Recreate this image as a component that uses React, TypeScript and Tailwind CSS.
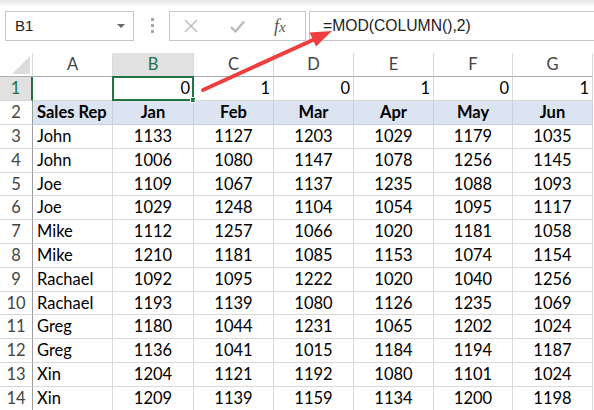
import React from 'react';

const colW = ['w-[80px]', 'w-[81px]', 'w-[80px]', 'w-[80px]', 'w-[80px]', 'w-[79px]', 'w-[80px]'];
const letters = ['A', 'B', 'C', 'D', 'E', 'F', 'G'];
const months = ['Jan', 'Feb', 'Mar', 'Apr', 'May', 'Jun'];

const rows: [string, number[]][] = [
  ['John', [1133, 1127, 1203, 1029, 1179, 1035]],
  ['John', [1006, 1080, 1147, 1078, 1256, 1145]],
  ['Joe', [1109, 1067, 1137, 1235, 1088, 1093]],
  ['Joe', [1029, 1248, 1104, 1054, 1095, 1117]],
  ['Mike', [1112, 1257, 1066, 1020, 1181, 1058]],
  ['Mike', [1210, 1181, 1085, 1153, 1074, 1154]],
  ['Rachael', [1092, 1095, 1222, 1020, 1040, 1256]],
  ['Rachael', [1193, 1139, 1080, 1126, 1235, 1069]],
  ['Greg', [1180, 1044, 1231, 1065, 1202, 1024]],
  ['Greg', [1136, 1041, 1015, 1184, 1194, 1187]],
  ['Xin', [1204, 1121, 1192, 1080, 1101, 1024]],
  ['Xin', [1209, 1139, 1159, 1134, 1200, 1198]],
];

const RowHead: React.FC<{ n: number; active?: boolean; h: string }> = ({ n, active, h }) => (
  <div
    className={`w-[33px] shrink-0 ${h} flex items-center justify-center border-b border-[#d9d9d9] ${
      active ? 'bg-[#e1e1e1] text-[#217346] border-r-2 border-r-[#217346]' : 'text-[#444] border-r border-r-[#9e9e9e]'
    }`}
  >
    {n}
  </div>
);

const Toolbar = () => (
  <div className="h-[53px] relative bg-white">
    <div className="h-[7px] bg-gradient-to-b from-[#e4e4e4] to-white" />
    <div className="flex items-start">
      {/* name box */}
      <div className="ml-[5px] mt-[4px] w-[129px] h-[30px] border border-[#c6c6c6] flex items-center justify-between pl-[9px] pr-[8px] text-[15px] text-[#222] font-['Liberation_Sans',sans-serif]">
        <span>B1</span>
        <span className="w-0 h-0 border-l-[4px] border-r-[4px] border-t-[4px] border-l-transparent border-r-transparent border-t-[#666]" />
      </div>
      <div className="ml-[17px] mt-[11px] flex flex-col gap-[3px]">
        <span className="w-[3px] h-[3px] bg-[#a6a6a6]" />
        <span className="w-[3px] h-[3px] bg-[#a6a6a6]" />
        <span className="w-[3px] h-[3px] bg-[#a6a6a6]" />
      </div>
      {/* formula buttons */}
      <div className="ml-[15px] mt-[4px] w-[137px] h-[30px] border border-[#c6c6c6] flex items-center">
        <svg width="14" height="14" viewBox="0 0 14 14" className="ml-[14px]">
          <path d="M1 1L13 13M13 1L1 13" stroke="#b9b9b9" strokeWidth="1.4" />
        </svg>
        <svg width="15" height="13" viewBox="0 0 15 13" className="ml-[32px]">
          <path d="M1 7L5.5 11.5L14 1.5" stroke="#b9b9b9" strokeWidth="2.2" fill="none" />
        </svg>
        <span className="ml-[29px] text-[18px] italic text-[#555] font-['Liberation_Serif',serif] leading-none">
          f<span className="text-[15px]">x</span>
        </span>
      </div>
      {/* formula input */}
      <div className="ml-[3px] mt-[4px] flex-1 h-[30px] border border-r-0 border-[#c6c6c6] flex items-center pl-[13px] text-[15.7px] text-[#222] font-['Liberation_Sans',sans-serif]">
        =MOD(COLUMN(),2)
      </div>
    </div>
  </div>
);

export default function App() {
  return (
    <div className="w-[594px] h-[410px] overflow-hidden bg-white relative font-['Lato',sans-serif] text-[16.5px] text-black">
      <Toolbar />
      {/* column headers */}
      <div className="flex h-[24px]">
        <div className="w-[33px] shrink-0 border-b border-b-[#ababab] border-r border-r-[#d9d9d9] relative">
          <svg width="18" height="18" viewBox="0 0 18 18" className="absolute right-[2px] bottom-[2px]">
            <path d="M18 0L18 18L0 18Z" fill="#dcdcdc" />
          </svg>
        </div>
        {letters.map((l, i) => (
          <div
            key={l}
            className={`${colW[i]} shrink-0 flex items-center justify-center border-b border-b-[#ababab] border-r border-r-[#d9d9d9] ${
              l === 'B' ? 'bg-[#e1e1e1] text-[#217346]' : 'text-[#444]'
            }`}
          >
            {l}
          </div>
        ))}
      </div>
      {/* row 1 */}
      <div className="flex h-[24px]">
        <RowHead n={1} active h="h-[24px]" />
        {[null, 0, 1, 0, 1, 0, 1].map((v, i) => (
          <div
            key={i}
            className={`${colW[i]} shrink-0 flex items-center justify-end pr-[3px] border-b border-r border-[#d9d9d9] relative`}
          >
            {v}
            {i === 1 && (
              <div className="absolute -left-px -top-px -right-px -bottom-px border-2 border-[#217346]">
                <div className="absolute -right-[4px] -bottom-[4px] w-[6px] h-[6px] bg-[#217346] border border-white" />
              </div>
            )}
          </div>
        ))}
      </div>
      {/* row 2 */}
      <div className="flex h-[24px]">
        <RowHead n={2} h="h-[24px]" />
        {['Sales Rep', ...months].map((t, i) => (
          <div
            key={t}
            className={`${colW[i]} shrink-0 flex items-center ${i === 0 ? 'justify-start pl-[4px]' : 'justify-center'} bg-[#dce4f2] font-bold border-b border-r border-[#c8d0de]`}
          >
            {t}
          </div>
        ))}
      </div>
      {rows.map(([name, vals], r) => (
        <div key={r} className="flex h-[23.8px]">
          <RowHead n={r + 3} h="h-[23.8px]" />
          <div className={`${colW[0]} shrink-0 flex items-center pl-[4px] border-b border-r border-[#d9d9d9]`}>{name}</div>
          {vals.map((v, i) => (
            <div key={i} className={`${colW[i + 1]} shrink-0 flex items-center justify-center border-b border-r border-[#d9d9d9]`}>
              {v}
            </div>
          ))}
        </div>
      ))}
      {/* red arrow */}
      <svg className="absolute left-0 top-0 pointer-events-none" width="594" height="410" viewBox="0 0 594 410">
        <line x1="203" y1="90" x2="314" y2="39.5" stroke="#ef3e3e" strokeWidth="4" strokeLinecap="round" />
        <polygon points="332,31 316,46.5 309.5,32.5" fill="#ef3e3e" />
      </svg>
    </div>
  );
}
